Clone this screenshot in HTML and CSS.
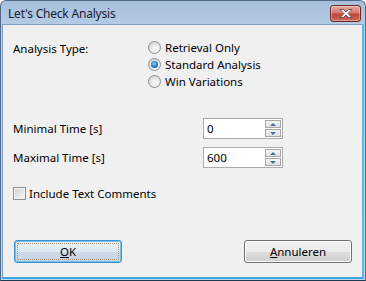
FILE: index.html
```html
<!DOCTYPE html>
<html>
<head>
<title>Let's Check Analysis</title>
<link rel="stylesheet" href="styles.css">
</head>
<body>
<div class="window">
<div class="titlebar">
<span class="title">Let's Check Analysis</span>
<span class="close"><svg width="14" height="9" viewBox="0 0 14 9"><path d="M1 0.5 H4.5 L7 3 L9.5 0.5 H13 L9 4.5 L13 8.5 H9.5 L7 6 L4.5 8.5 H1 L5 4.5 Z" fill="#fff" stroke="#5a3a38" stroke-width="0.8"/></svg></span>
</div>
<div class="client">
<div class="typerow">
<span class="typelabel">Analysis Type:</span>
<div class="radios">
<label class="opt"><span class="radio"></span>Retrieval Only</label>
<label class="opt"><span class="radio on"></span>Standard Analysis</label>
<label class="opt"><span class="radio"></span>Win Variations</label>
</div>
</div>
<div class="numrow first">
<span class="numlabel">Minimal Time [s]</span>
<div class="spin"><span class="val">0</span><div class="arrows"><span class="up"></span><span class="down"></span></div></div>
</div>
<div class="numrow">
<span class="numlabel">Maximal Time [s]</span>
<div class="spin"><span class="val">600</span><div class="arrows"><span class="up"></span><span class="down"></span></div></div>
</div>
<label class="check"><span class="box"></span>Include Text Comments</label>
<div class="buttons">
<button class="btn default"><span class="focus"><u>O</u>K</span></button>
<button class="btn"><u>A</u>nnuleren</button>
</div>
</div>
</div>
</body>
</html>
```

FILE: styles.css
```css
* {
box-sizing: border-box;
}
body {
margin: 0;
font-family: "Noto Sans", "Open Sans", sans-serif;
font-size: 11.5px;
color: #000;
background: #fff;
}
.window {
width: 366px;
height: 281px;
border: 1px solid #4f6a8a;
border-bottom-color: #1c3a52;
border-radius: 6px 6px 0 0;
background: linear-gradient(#a6bfdb, #b9cfe8 30px, #c2d6ec);
display: flex;
flex-direction: column;
padding: 0 1px 1px 1px;
}
.titlebar {
height: 23px;
display: flex;
align-items: center;
justify-content: space-between;
padding: 0 3px 0 6px;
}
.title {
color: #1a1a32;
font-size: 12px;
position: relative;
top: 1px;
letter-spacing: -0.2px;
}
.close {
width: 31px;
height: 17px;
border: 1px solid #6a2a24;
border-radius: 3px;
background: linear-gradient(#e4a99f, #d27b6e 45%, #c0443a 55%, #cf6a5b);
display: flex;
align-items: center;
justify-content: center;
margin-top: 2px;
box-shadow: inset 0 0 0 1px rgba(255,255,255,0.35);
}
.client {
flex: 1;
background: #f0f0f0;
border: 1px solid #7d9fc4;
border-bottom: 2px solid #3aa6de;
border-right: 2px solid #5cb8e6;
display: flex;
flex-direction: column;
padding: 14px 10px 14px 10px;
}
.typerow {
display: flex;
align-items: flex-start;
}
.typelabel {
width: 135px;
line-height: 17px;
padding-top: 1px;
}
.radios {
display: flex;
flex-direction: column;
}
.opt {
display: flex;
align-items: center;
height: 17px;
gap: 4px;
}
.radio {
width: 13px;
height: 13px;
border-radius: 50%;
border: 1px solid #8c8f91;
background: radial-gradient(circle at 60% 65%, #f6f6f6 20%, #d4d4d4 80%);
display: flex;
align-items: center;
justify-content: center;
}
.radio.on::after {
content: "";
width: 7px;
height: 7px;
border-radius: 50%;
background: radial-gradient(circle at 45% 40%, #9fd6f5 0, #2a86c8 45%, #0b3f75 100%);
}
.numrow {
display: flex;
align-items: center;
margin-top: 8px;
}
.numrow.first {
margin-top: 28px;
}
.numlabel {
width: 190px;
}
.spin {
width: 80px;
height: 21px;
border: 1px solid #a9abae;
background: #fff;
display: flex;
align-items: center;
justify-content: space-between;
padding: 0 1px 0 3px;
}
.val {
line-height: 17px;
}
.arrows {
display: flex;
flex-direction: column;
gap: 1px;
}
.arrows span {
width: 16px;
height: 8px;
border: 1px solid #a7a7a7;
background: linear-gradient(#f6f6f6, #e1e1e1);
display: flex;
align-items: center;
justify-content: center;
}
.up::after {
content: "";
border: 3px solid transparent;
border-top: 0;
border-bottom: 3px solid #4c6aa8;
}
.down::after {
content: "";
border: 3px solid transparent;
border-bottom: 0;
border-top: 3px solid #4c6aa8;
}
.check {
display: flex;
align-items: center;
gap: 3px;
margin-top: 17px;
height: 17px;
}
.box {
width: 13px;
height: 13px;
border: 1px solid #8c8f91;
background: linear-gradient(135deg, #d0d0d0, #f8f8f8);
box-shadow: inset 0 0 0 1px #f4f4f4;
}
.buttons {
margin-top: auto;
display: flex;
justify-content: space-between;
padding: 0 0 0 1px;
}
.btn {
width: 108px;
height: 23px;
font-family: inherit;
font-size: 11.5px;
color: #000;
border: 1px solid #707070;
border-radius: 3px;
background: linear-gradient(#f2f2f2 0, #ebebeb 50%, #dddddd 51%, #cfcfcf 100%);
box-shadow: inset 0 0 0 1px #fcfcfc;
padding: 0;
}
.btn.default {
border-color: #3c8fcf;
background: linear-gradient(#eaf3fa 0, #dde9f2 50%, #cddbe6 51%, #c6d6e3 100%);
box-shadow: inset 0 0 0 1px #6fc4ee;
padding: 2px;
}
.focus {
display: flex;
align-items: center;
justify-content: center;
height: 100%;
border: 1px dotted #c08a70;
}
```
